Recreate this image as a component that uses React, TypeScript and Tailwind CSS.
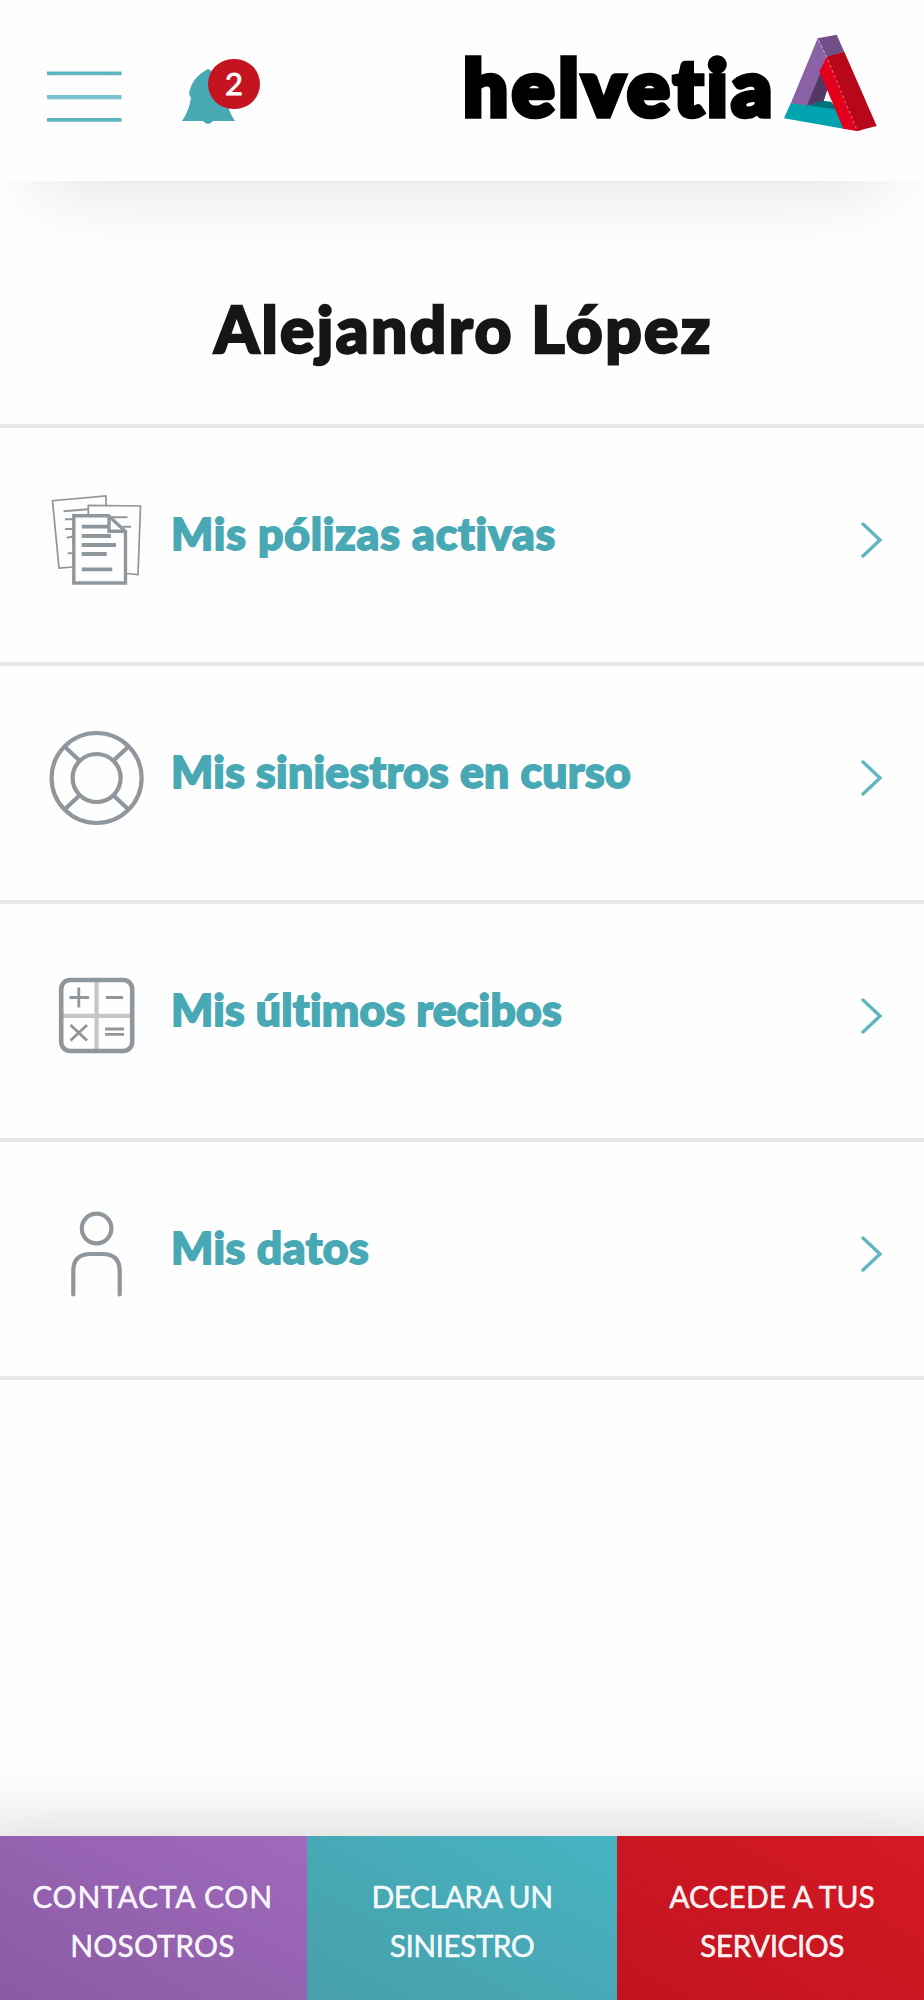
import React from 'react';

type Item = {
  label: string;
  labelClass: string;
  icon: React.ReactNode;
};

type Action = {
  lines: { text: string; tracking: string }[];
  className: string;
};

const PoliciesIcon: React.FC = () => (
  <svg
    className="h-[100px] w-[100px]"
    viewBox="0 0 100 100"
    fill="none"
    stroke="#8f969c"
  >
    <path d="M26 77 12 78 5.5 10.7 59 6V16" strokeWidth="1.7" />
    <path d="M41.3 24V15.3L93.5 16 91 84.5 79 83.5" strokeWidth="1.7" />
    <path
      d="M16.5 21.3 41 19.3M18 29.3H26M18 39H26M19.7 47.7 26 46.5M20.7 63.3H26M65 27.3H80.5M76 36.7H84"
      strokeWidth="2"
    />
    <path d="M26.8 25.8H61.5L78.5 41.5V93H26.8Z" fill="#fefefe" strokeWidth="3.4" />
    <path d="M62 26V41.2H78" strokeWidth="3.4" />
    <path
      d="M34.7 36.7H61.5M34.7 46H64M34.7 55H69M34.7 64H59.7M34.7 79.3H65.3"
      strokeWidth="3.8"
    />
  </svg>
);

const ClaimsIcon: React.FC = () => (
  <svg
    className="h-[100px] w-[100px]"
    viewBox="0 0 100 100"
    fill="none"
    stroke="#8f969c"
    strokeWidth="4.2"
  >
    <circle cx="49.6" cy="50" r="45" />
    <circle cx="49.6" cy="50" r="24" />
    <path d="M18 19 33 33M81 19 66 33M18 81 33 67M81 81 66 67" />
  </svg>
);

const ReceiptsIcon: React.FC = () => (
  <svg
    className="h-[100px] w-[100px]"
    viewBox="0 0 100 100"
    fill="none"
    stroke="#8f969c"
  >
    <path d="M49.6 14V86M14 49.8H86" stroke="#c3c7ca" strokeWidth="4.2" />
    <rect x="14.2" y="14" width="71" height="71" rx="9" strokeWidth="4.6" />
    <path
      d="M22.5 31.5H42M31.8 21.5V41.5M59 31.5H76M23.5 59 40 74.5M40 59 23.5 74.5M58 63H77M58 68.3H77"
      strokeWidth="2.8"
    />
  </svg>
);

const ProfileIcon: React.FC = () => (
  <svg
    className="h-[100px] w-[100px]"
    viewBox="0 0 100 100"
    fill="none"
    stroke="#8f969c"
    strokeWidth="4.2"
  >
    <circle cx="49.6" cy="24.5" r="14.8" />
    <path d="M26.3 90.5V67Q26.3 50 43.5 50H55.5Q72.7 50 72.7 67V90.5" strokeLinecap="round" />
  </svg>
);

const LogoMark: React.FC = () => (
  <svg className="h-[100px] w-[96px]" viewBox="0 0 96 100">
    <path d="M39 34 24 73 41.5 68.5 46 55Z" fill="#543864" />
    <path d="M35.7 5.3 45 24 24.7 73 8.7 70.5Z" fill="#8b62a5" />
    <path d="M35.7 5.3 54.7 1.7 62.3 19 44.7 24Z" fill="#71508a" />
    <path d="M24 73 41 67.7 49 68.7 57 78Z" fill="#007079" />
    <path d="M8.7 70.3 56 76.5 63 96 2 85.3Z" fill="#00a3ae" />
    <path d="M44.7 23.7 52 22 80 97 74.7 98 61.3 95.7 37.5 38.5Z" fill="#e4001c" />
    <path d="M44.7 23.7 62.3 18.7 94.7 93 74.7 98Z" fill="#b80718" />
    <path
      d="M36.5 7 44.7 24 75 97"
      fill="none"
      stroke="#fff"
      strokeOpacity=".35"
      strokeWidth="1.2"
      strokeDasharray="3 2.5"
    />
  </svg>
);

const items: Item[] = [
  {
    label: 'Mis pólizas activas',
    labelClass: 'tracking-[0.8px]',
    icon: <PoliciesIcon />
  },
  {
    label: 'Mis siniestros en curso',
    labelClass: 'tracking-[0.3px]',
    icon: <ClaimsIcon />
  },
  {
    label: 'Mis últimos recibos',
    labelClass: 'tracking-[0.25px]',
    icon: <ReceiptsIcon />
  },
  {
    label: 'Mis datos',
    labelClass: 'tracking-[0.5px]',
    icon: <ProfileIcon />
  }
];

const actions: Action[] = [
  {
    lines: [
      { text: 'CONTACTA CON', tracking: 'tracking-[0.8px]' },
      { text: 'NOSOTROS', tracking: 'tracking-[0.2px]' }
    ],
    className: 'w-[307px] pr-[2px] from-[#8a5ba3] to-[#a069bd]'
  },
  {
    lines: [
      { text: 'DECLARA UN', tracking: 'tracking-[-0.5px]' },
      { text: 'SINIESTRO', tracking: 'tracking-[-0.6px]' }
    ],
    className: 'w-[310px] from-[#479fa9] to-[#46b4c2]'
  },
  {
    lines: [
      { text: 'ACCEDE A TUS', tracking: 'tracking-[0px]' },
      { text: 'SERVICIOS', tracking: 'tracking-[-0.6px]' }
    ],
    className: 'w-[307px] pl-[3px] from-[#c11420] to-[#d41924]'
  }
];

const Header: React.FC = () => (
  <header className="flex h-[181px] shrink-0 items-start bg-[#fefefe] shadow-[0_45px_80px_-42px_rgba(0,0,0,0.13)]">
    <button className="mt-[71px] ml-[47px]" aria-label="Menú">
      <svg className="h-[52px] w-[75px]" viewBox="0 0 75 52" fill="#5ab5c0">
        <rect y="0.5" width="74.5" height="3.7" />
        <rect y="24" width="74.5" height="4.3" fill="#7bc3cc" />
        <rect y="47" width="74.5" height="3.7" />
      </svg>
    </button>
    <div className="relative mt-[69px] ml-[60px] h-[56px] w-[54px]">
      <svg className="h-[56px] w-[54px]" viewBox="0 0 54 56" fill="#48a9b5">
        <path d="M26 0Q9 9 7 25L9 29Q7 42 0 52H53Q46 42 44 29L46 25Q44 9 26 0Z" />
        <path d="M21 52Q26 58 31 52Z" />
      </svg>
      <span className="absolute -top-[10px] left-[26px] flex h-[50px] w-[52px] items-center justify-center rounded-full bg-[#c41422] pb-[2px] text-[31px] text-white [-webkit-text-stroke:0.8px]">
        2
      </span>
    </div>
    <div className="mt-[33px] ml-auto mr-[46px] flex">
      <span className="mt-[3px] mr-[6px] text-[79px] leading-[100px] font-black tracking-[4px] text-black [-webkit-text-stroke:5.5px]">
        helvetia
      </span>
      <LogoMark />
    </div>
  </header>
);

const App: React.FC = () => {
  return (
    <div className="flex h-[2000px] w-[924px] flex-col overflow-hidden bg-[#fefefe] font-['Lato',sans-serif] [font-variant-ligatures:none]">
      <Header />

      <h1 className="h-[243px] shrink-0 pt-[98px] pl-[3px] text-center text-[64px] leading-[100px] font-black tracking-[2.4px] text-[#161614] [-webkit-text-stroke:2.4px]">
        Alejandro López
      </h1>

      <ul className="grow border-t-[4px] border-[#e6e8e9]">
        {items.map((item) => (
          <li
            key={item.label}
            className="flex h-[238px] items-start border-b-[4px] border-[#e6e8e9]"
          >
            <div className="mt-[62px] ml-[47px]">{item.icon}</div>
            <span
              className={`mt-[75px] ml-[24px] text-[44.5px] leading-[60px] font-black whitespace-nowrap text-[#48a9b5] [-webkit-text-stroke:1.8px] ${item.labelClass}`}
            >
              {item.label}
            </span>
            <svg
              className="mt-[94px] mr-[41px] ml-auto h-[36px] w-[22px]"
              viewBox="0 0 22 36"
              fill="none"
              stroke="#5fb6c0"
              strokeWidth="3.4"
              strokeLinecap="round"
            >
              <path d="M2 2 19 18 2 34" />
            </svg>
          </li>
        ))}
      </ul>

      <footer className="flex h-[164px] shrink-0 shadow-[0_30px_80px_30px_rgba(0,0,0,0.19)]">
        {actions.map((action) => (
          <button
            key={action.lines[0].text}
            className={`flex flex-col items-center bg-linear-to-tr pt-[36px] text-[30px] leading-[49px] text-white/95 [-webkit-text-stroke:0.5px] ${action.className}`}
          >
            {action.lines.map((line) => (
              <span key={line.text} className={line.tracking}>
                {line.text}
              </span>
            ))}
          </button>
        ))}
      </footer>
    </div>
  );
};

export default App;
